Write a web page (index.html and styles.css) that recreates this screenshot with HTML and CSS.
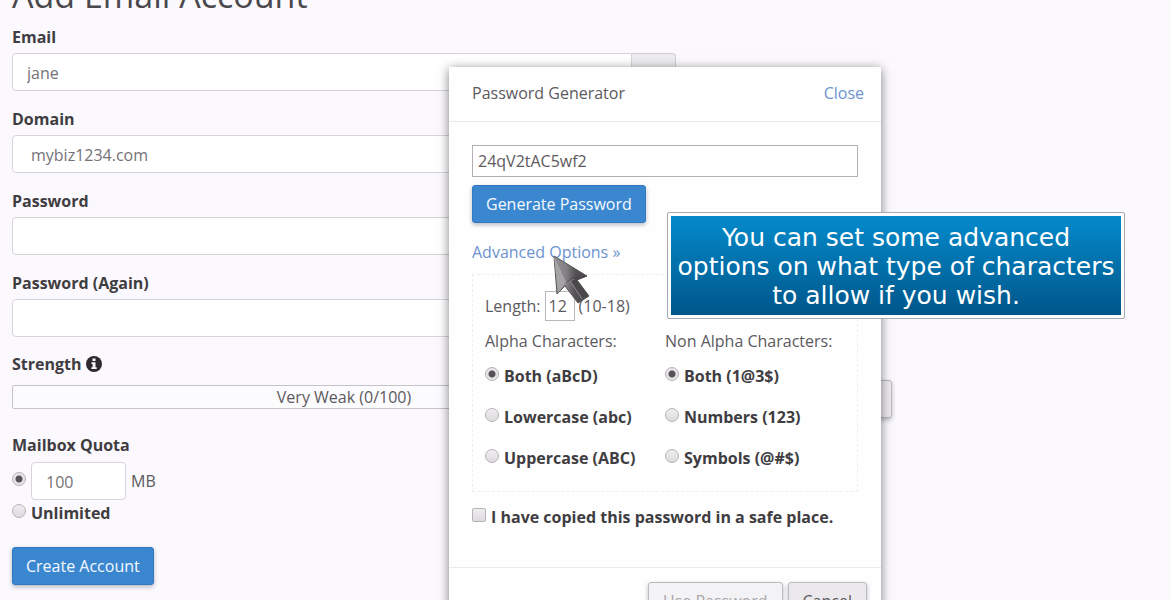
FILE: index.html
```html
<!DOCTYPE html>
<html lang="en">
<head>
  <meta charset="UTF-8" />
  <title>Add Email Account</title>
  <link rel="stylesheet" href="styles.css">
</head>
<body>
  <form class="account">
    <h1>Add Email Account</h1>
    <div class="field">
      <label for="email">Email</label>
      <div class="input-group">
        <input type="text" id="email" value="jane">
        <span class="addon"></span>
      </div>
    </div>
    <div class="field">
      <label for="domain">Domain</label>
      <select id="domain">
        <option>mybiz1234.com</option>
      </select>
    </div>
    <div class="field">
      <label for="password">Password</label>
      <input type="password" id="password">
    </div>
    <div class="field">
      <label for="password2">Password (Again)</label>
      <input type="password" id="password2">
    </div>
    <div class="field strength">
      <div class="label">Strength
        <svg class="info" viewBox="0 0 16 16"><circle cx="8" cy="8" r="8" fill="#2c2a2e"/><path d="M6.5 2.5h3v2.4h-3zM5.5 6.2h4v5h1.2v1.8H5.4v-1.8h1.2V8H5.5z" fill="#fbf9fd"/></svg>
      </div>
      <div class="strength-row">
        <div class="meter">Very Weak (0/100)</div>
        <button type="button" class="btn-grey generator" aria-label="Password Generator"></button>
      </div>
    </div>
    <div class="quota">
      <div class="label">Mailbox Quota</div>
      <div class="quota-row">
        <input type="radio" name="quota" aria-label="Limited quota" checked>
        <input type="text" class="quota-size" aria-label="Quota in MB" value="100">
        <span>MB</span>
      </div>
      <label class="choice"><input type="radio" name="quota">Unlimited</label>
    </div>
    <button type="button" class="btn-blue">Create Account</button>
  </form>

  <div class="modal" role="dialog" aria-labelledby="modalTitle">
    <div class="modal-header">
      <span id="modalTitle">Password Generator</span>
      <a href="#">Close</a>
    </div>
    <div class="modal-body">
      <input type="text" class="generated" aria-label="Generated password" value="24qV2tAC5wf2">
      <button type="button" class="btn-blue">Generate Password</button>
      <a href="#" class="advanced">Advanced Options »</a>
      <div class="options">
        <div class="length">
          <label for="length">Length:</label>
          <input type="text" id="length" value="12">
          <span>(10-18)</span>
        </div>
        <div class="columns">
          <div class="column">
            <div>Alpha Characters:</div>
            <label class="choice"><input type="radio" name="alpha" checked>Both (aBcD)</label>
            <label class="choice"><input type="radio" name="alpha">Lowercase (abc)</label>
            <label class="choice"><input type="radio" name="alpha">Uppercase (ABC)</label>
          </div>
          <div class="column">
            <div>Non Alpha Characters:</div>
            <label class="choice"><input type="radio" name="nonalpha" checked>Both (1@3$)</label>
            <label class="choice"><input type="radio" name="nonalpha">Numbers (123)</label>
            <label class="choice"><input type="radio" name="nonalpha">Symbols (@#$)</label>
          </div>
        </div>
      </div>
      <label class="choice copied"><input type="checkbox">I have copied this password in a safe place.</label>
    </div>
    <div class="modal-footer">
      <button type="button" class="btn-grey" disabled>Use Password</button>
      <button type="button" class="btn-grey">Cancel</button>
    </div>
  </div>

  <div class="caption">You can set some advanced<br>options on what type of characters<br>to allow if you wish.</div>

  <svg class="cursor" viewBox="0 0 40 52">
    <defs>
      <linearGradient id="steel" x1="0" y1="0" x2="1" y2="0">
        <stop offset="0" stop-color="#929092"/>
        <stop offset="0.35" stop-color="#828082"/>
        <stop offset="0.6" stop-color="#555355"/>
        <stop offset="1" stop-color="#444244"/>
      </linearGradient>
    </defs>
    <path d="M2 2 5 40 13 32 26 49 37 42 25 26 35 22z" fill="url(#steel)" stroke="#555355" stroke-width="1" stroke-linejoin="round"/>
    <path d="M2 2 14 28 6 39z" fill="#a5a3a5"/>
    <path d="M14 29 21 23 35 22 25 26 36 42 32 44 19 27z" fill="#4a484a"/>
    <path d="M14 31 18 27 30 45M18 27 22 25" fill="none" stroke="#8c8a8c"/>
  </svg>
</body>
</html>
```

FILE: styles.css
```css
* {
  box-sizing: border-box;
}
body {
  margin: 0;
  height: 100vh;
  overflow: hidden;
  background: #fbf9fd;
  color: #5c5a5e;
  font: 16px/24px "Open Sans", sans-serif;
}
input, select, button {
  font: inherit;
  color: inherit;
}
a {
  color: #6c93ce;
  text-decoration: none;
}
h1 {
  margin: -26px 0 9px;
  color: #4a484c;
  font-size: 34px;
  font-weight: 400;
  line-height: 42px;
}
label, .label {
  color: #3f3d41;
  font-weight: 700;
}

/* account form */
.account {
  padding: 0 12px;
}
.field {
  width: 664px;
  max-width: 100%;
  margin-bottom: 16px;
}
.field > label, .label {
  display: block;
  margin-bottom: 4px;
}
.field input, .field select, .quota-size {
  display: block;
  width: 100%;
  height: 38px;
  padding: 2px 14px 0;
  background: #fff;
  border: 1px solid #d6d3d9;
  border-radius: 4px;
  color: #747276;
  appearance: none;
}
.field select {
  padding-left: 18px;
}
.input-group {
  display: flex;
}
.input-group input {
  border-radius: 4px 0 0 4px;
}
.addon {
  flex: none;
  width: 44px;
  background: #ececee;
  border: 1px solid #d0ced2;
  border-left: 0;
  border-radius: 0 4px 4px 0;
}
.field.strength {
  width: 880px;
  margin-top: -17px;
  padding-top: 16px;
  margin-bottom: 15px;
}
.info {
  width: 16px;
  height: 16px;
  vertical-align: -2px;
}
.strength-row {
  display: flex;
  align-items: flex-start;
}
.meter {
  width: 664px;
  height: 24px;
  margin-top: 5px;
  background: #fcfbfd;
  border: 1px solid #c6c3c8;
  border-radius: 2px;
  line-height: 22px;
  text-align: center;
}
.generator {
  flex: 1;
}
.quota-row {
  display: flex;
  align-items: center;
  gap: 5px;
  margin: 5px 0 1px;
}
.quota-size {
  width: 95px;
}

/* radios and tick boxes */
input[type="radio"], input[type="checkbox"] {
  flex: none;
  width: 14px;
  height: 14px;
  margin: 0 0 4px;
  appearance: none;
  background: linear-gradient(#efedef, #dddbdd);
  border: 1px solid #b5b2b6;
  border-radius: 50%;
}
input[type="checkbox"] {
  border-radius: 2px;
}
input[type="radio"]:checked {
  background: radial-gradient(circle, #555357 3px, #e6e4e7 4px);
}
.choice {
  display: flex;
  align-items: center;
  gap: 5px;
}

/* buttons */
.btn-blue, .btn-grey {
  height: 38px;
  padding: 0 14px;
  border: 1px solid #3079c0;
  border-radius: 3px;
  background: #3b87cf;
  color: #f4f9ff;
  box-shadow: 0 2px 4px rgba(60, 60, 90, 0.35);
}
.btn-blue {
  padding: 0 13px;
}
.btn-grey {
  background: #ebe9ec;
  border-color: #bebbc0;
  color: #5c5a5e;
}
.btn-grey:disabled {
  background: #f3f2f4;
  color: #aaa8ac;
}
.quota {
  margin-bottom: 22px;
}

/* password generator */
.modal {
  position: absolute;
  top: 67px;
  left: 449px;
  width: 432px;
  background: #fefefe;
  box-shadow: 0 2px 10px rgba(0, 0, 0, 0.5);
}
.modal-header {
  display: flex;
  justify-content: space-between;
  padding: 14px 17px 16px 23px;
  border-bottom: 1px solid #ebe9ec;
}
.modal-body {
  display: flex;
  flex-direction: column;
  align-items: flex-start;
  padding: 23px 23px 38px;
}
.generated {
  width: 100%;
  height: 32px;
  margin-bottom: 8px;
  padding: 0 5px;
  background: #fff;
  border: 1px solid #b2b0b4;
}
.advanced {
  margin: 17px 0 10px;
}
.options {
  width: 100%;
  padding: 16px 12px 21px;
  border: 1px dashed #f0eef1;
}
.length {
  display: flex;
  align-items: center;
  gap: 4px;
  margin-bottom: 8px;
}
.length label {
  color: inherit;
  font-weight: 400;
}
.length input {
  width: 30px;
  height: 30px;
  padding: 0 3px;
  background: #fff;
  border: 1px solid #b9b7bb;
}
.columns {
  display: grid;
  grid-template-columns: 180px 1fr;
}
.column {
  display: flex;
  flex-direction: column;
  gap: 17px;
  white-space: nowrap;
}
.column > div {
  margin-bottom: -6px;
}
.copied {
  margin-top: 13px;
}
.modal-footer {
  display: flex;
  justify-content: flex-end;
  gap: 5px;
  padding: 14px;
  border-top: 1px solid #ebe9ec;
}

/* tutorial overlay */
.caption {
  position: absolute;
  top: 212px;
  left: 667px;
  width: 458px;
  padding: 7px 0 5px;
  border: 4px solid #fff;
  outline: 1px solid #aaa8b0;
  outline-offset: -1px;
  border-radius: 2px;
  background: linear-gradient(#048acb, #00568a) padding-box;
  color: #fff;
  font: 25px/29px "DejaVu Sans", sans-serif;
  text-align: center;
  white-space: nowrap;
}
.cursor {
  position: absolute;
  top: 254px;
  left: 552px;
  width: 40px;
  height: 52px;
}
```
